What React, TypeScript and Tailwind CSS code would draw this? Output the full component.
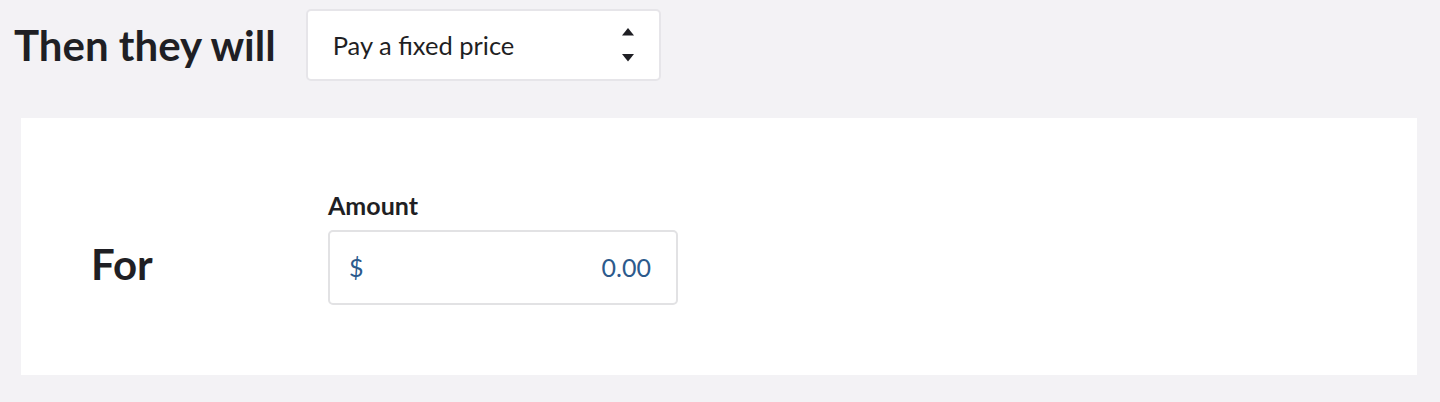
import React from 'react';

function SortArrows() {
  return (
    <svg width="14" height="36" viewBox="0 0 14 36" aria-hidden="true">
      <path d="M7 1 L13 8.5 L1 8.5 Z" fill="#1f1f24" />
      <path d="M1 27 L13 27 L7 34.5 Z" fill="#1f1f24" />
    </svg>
  );
}

export default function App() {
  return (
    <div
      className="min-h-[402px] w-full bg-[#f3f2f5] text-[#1f1f24]"
      style={{ fontFamily: 'Lato, "Open Sans", sans-serif' }}
    >
      <div className="flex items-center gap-[30px] pl-[14px] pt-[9px]">
        <h2 className="text-[42px] font-bold leading-none">Then they will</h2>
        <div className="flex h-[72px] w-[355px] items-center justify-between rounded-[5px] border-2 border-[#e6e5e9] bg-white pl-[25px] pr-[24px]">
          <span className="text-[25.5px]">Pay a fixed price</span>
          <SortArrows />
        </div>
      </div>

      <div className="ml-[21px] mr-[23px] mt-[37px] flex h-[257px] items-center bg-white">
        <div className="w-[307px] pl-[70px] pt-[36px]">
          <span className="text-[42px] font-bold">For</span>
        </div>
        <div className="flex flex-col pt-[5px]">
          <label className="mb-[12px] text-[25px] font-bold leading-none">Amount</label>
          <div className="flex h-[75px] w-[350px] items-center justify-between rounded-[5px] border-2 border-[#e2e2e4] px-[19px] text-[25px] text-[#2c5a8c]">
            <span>$</span>
            <span className="pr-[6px]">0.00</span>
          </div>
        </div>
      </div>
    </div>
  );
}
